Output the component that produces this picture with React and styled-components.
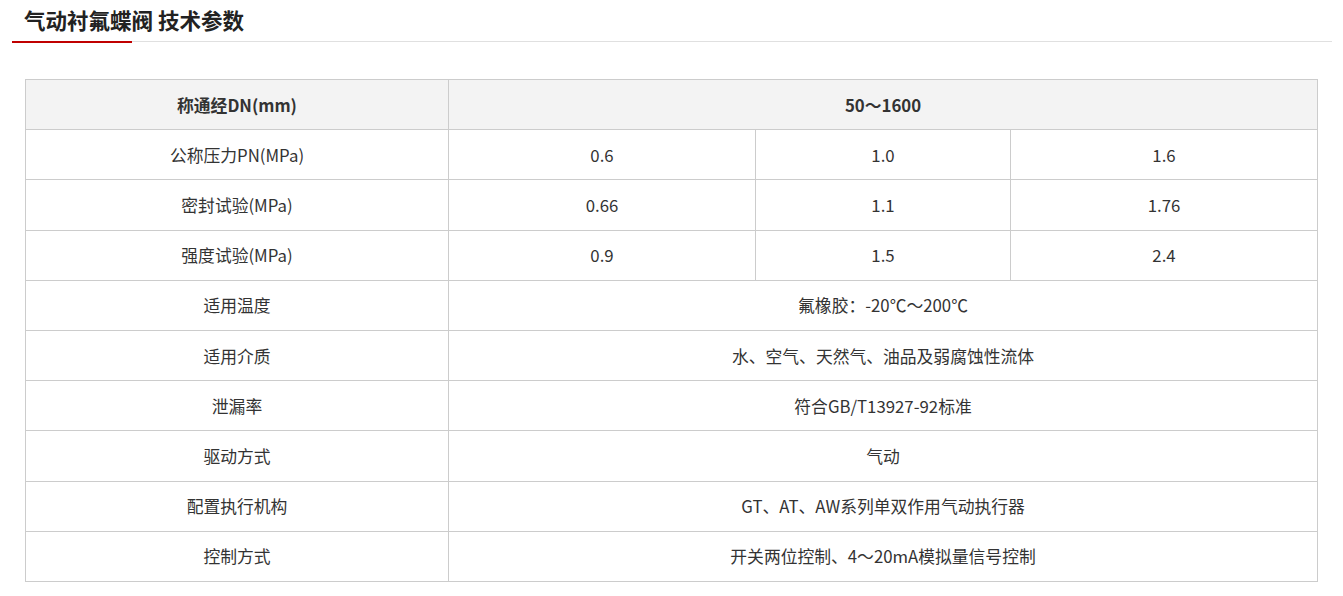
import React from 'react'
import styled, { createGlobalStyle } from 'styled-components'

const GlobalStyle = createGlobalStyle`
  body {
    margin: 0;
    background: #fff;
    font-family: "Microsoft YaHei", "Noto Sans CJK SC", "Noto Sans", sans-serif;
    color: #333;
  }
`

const rows = [
  { label: '公称压力PN(MPa)', values: ['0.6', '1.0', '1.6'] },
  { label: '密封试验(MPa)', values: ['0.66', '1.1', '1.76'] },
  { label: '强度试验(MPa)', values: ['0.9', '1.5', '2.4'] },
  { label: '适用温度', values: ['氟橡胶：-20℃～200℃'] },
  { label: '适用介质', values: ['水、空气、天然气、油品及弱腐蚀性流体'] },
  { label: '泄漏率', values: ['符合GB/T13927-92标准'] },
  { label: '驱动方式', values: ['气动'] },
  { label: '配置执行机构', values: ['GT、AT、AW系列单双作用气动执行器'] },
  { label: '控制方式', values: ['开关两位控制、4～20mA模拟量信号控制'] },
]

export default function App() {
  return (
    <Page>
      <GlobalStyle />
      <Heading>
        <Title>气动衬氟蝶阀 技术参数</Title>
        <Rule>
          <RedBar />
          <GrayLine />
        </Rule>
      </Heading>
      <Table>
        <colgroup>
          <col style={{ width: 423 }} />
          <col style={{ width: 307 }} />
          <col style={{ width: 255 }} />
          <col style={{ width: 307 }} />
        </colgroup>
        <tbody>
          <tr>
            <Cell head>称通经DN(mm)</Cell>
            <Cell head colSpan={3}>50～1600</Cell>
          </tr>
          {rows.map((r) => (
            <tr key={r.label}>
              <Cell>{r.label}</Cell>
              {r.values.length === 1 ? (
                <Cell colSpan={3}>{r.values[0]}</Cell>
              ) : (
                r.values.map((v, i) => <Cell key={i}>{v}</Cell>)
              )}
            </tr>
          ))}
        </tbody>
      </Table>
    </Page>
  )
}

const Page = styled.div`
  padding: 0 11px 14px 12px;
`

const Heading = styled.div`
  display: flex;
  flex-direction: column;
`

const Title = styled.h2`
  margin: 0;
  padding-left: 12px;
  font-size: 21.5px;
  font-weight: bold;
  line-height: 40px;
  color: #222;
`

const Rule = styled.div`
  display: flex;
  align-items: center;
  height: 3px;
`

const RedBar = styled.span`
  width: 120px;
  height: 2px;
  background: #c00000;
`

const GrayLine = styled.span`
  flex: 1;
  height: 1px;
  background: #e0e0e0;
`

const Table = styled.table`
  margin: 36px 0 0 13px;
  width: 1293px;
  border-collapse: collapse;
  table-layout: fixed;
`

const Cell = styled.td`
  height: 49.2px;
  padding: 0;
  border: 1px solid #cccccc;
  text-align: center;
  vertical-align: middle;
  font-size: 16.8px;
  color: #333;
  background: ${(p) => (p.head ? '#f3f3f3' : '#fff')};
  font-weight: ${(p) => (p.head ? 'bold' : 'normal')};
`
